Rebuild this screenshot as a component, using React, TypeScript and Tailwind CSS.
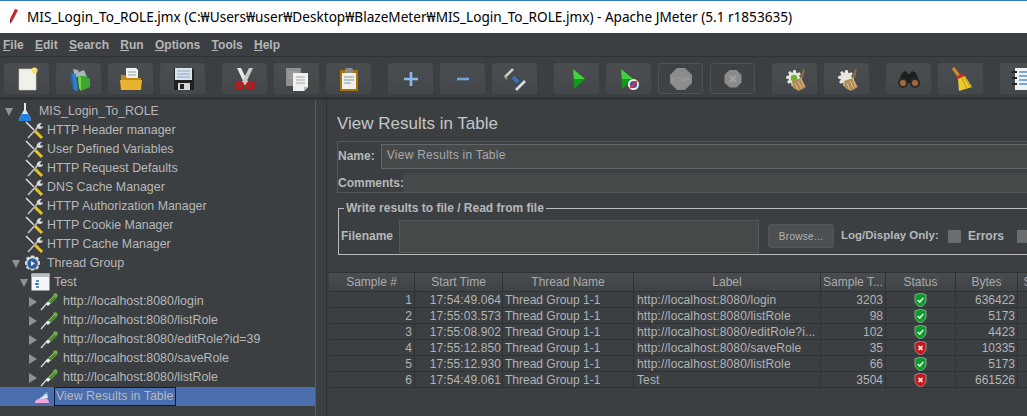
import type { ReactNode } from "react";

const textFont = "font-['Liberation_Sans',Arial,sans-serif]";

const Svg = ({ size = 24, view = 24, children }: { size?: number; view?: number; children: ReactNode }) => (
  <svg width={size} height={size} viewBox={`0 0 ${view} ${view}`} className="shrink-0">
    {children}
  </svg>
);

const NewIcon = () => (
  <Svg>
    <path d="M4 2h15l2 2v19H4z" fill="#f1f0ea" stroke="#cfcfc8" strokeWidth="0.6" />
    <circle cx="19.5" cy="3.5" r="3" fill="#f5e27a" />
  </Svg>
);
const TemplatesIcon = () => (
  <Svg>
    <path d="M6 2l5 1 1 2 5-2 3 7H8z" fill="#aab4ba" />
    <path d="M3 6l6 1 2 17-5-1z" fill="#2f7fc9" />
    <path d="M3 6l2 1 2 16-1 0z" fill="#1d5f9f" />
    <path d="M11 9h7l5 3v8l-9 4-2-3z" fill="#3aa92f" />
    <path d="M11 9l3 1 0 14-2-3z" fill="#7fd34e" />
  </Svg>
);
const OpenIcon = () => (
  <Svg>
    <path d="M7 1h10l2 2v10H7z" fill="#f2f2ee" />
    <path d="M9 5h8M9 8h8" stroke="#9aa0a6" strokeWidth="1" />
    <path d="M2 8h4l2 3h14v11H2z" fill="#c08a14" />
    <path d="M1 13h22l-1 10H2z" fill="#eab32f" />
  </Svg>
);
const SaveIcon = () => (
  <Svg>
    <path d="M3 1h18l2 2v20H3z" fill="#1e2022" />
    <rect x="4" y="1" width="17" height="12" fill="#dde3ea" />
    <path d="M6 4h13M6 7h13M6 10h13" stroke="#8ca6c4" strokeWidth="1" />
    <rect x="7" y="16" width="12" height="7" fill="#d6d6d6" />
    <rect x="9" y="17" width="4" height="5" fill="#222" />
  </Svg>
);
const CutIcon = () => (
  <Svg>
    <path d="M4 1l4 0 7 14-3 3z" fill="#e7e7e7" />
    <path d="M20 1l-4 0-7 14 3 3z" fill="#c9c9c9" />
    <circle cx="6.5" cy="18.5" r="4.5" fill="#c91414" />
    <circle cx="17.5" cy="18.5" r="4.5" fill="#c91414" />
    <circle cx="6.5" cy="18.5" r="1.5" fill="#4b4d4f" />
    <circle cx="17.5" cy="18.5" r="1.5" fill="#4b4d4f" />
  </Svg>
);
const CopyIcon = () => (
  <Svg>
    <rect x="1" y="1" width="15" height="18" fill="#8d8f90" />
    <path d="M3 5h10M3 8h10M3 11h10" stroke="#a9abac" strokeWidth="1" />
    <path d="M8 6h15v14l-4 4H8z" fill="#f0f0ee" />
    <path d="M11 10h9M11 13h9M11 16h9" stroke="#a4a6a8" strokeWidth="1" />
    <path d="M19 24v-4h4z" fill="#b9b9b7" />
  </Svg>
);
const PasteIcon = () => (
  <Svg>
    <rect x="3" y="3" width="18" height="21" fill="#a8720f" />
    <rect x="5" y="6" width="14" height="16" fill="#f0f0e8" />
    <rect x="8" y="1" width="8" height="5" rx="2" fill="#8b8d8f" />
    <path d="M7 10h10M7 13h10M7 16h7" stroke="#7f93a6" strokeWidth="1" />
  </Svg>
);
const PlusIcon = () => (
  <Svg>
    <path d="M12 5v14M5 12h14" stroke="#8ab8ec" strokeWidth="2.6" />
  </Svg>
);
const MinusIcon = () => (
  <Svg>
    <path d="M6 12h12" stroke="#6ea6de" strokeWidth="2.6" />
  </Svg>
);
const ToggleIcon = () => (
  <Svg>
    <path d="M2 10l8-8" stroke="#c7d0c7" strokeWidth="2.6" />
    <path d="M2 10l2 2" stroke="#6fae4f" strokeWidth="2" />
    <path d="M10 10l5 5" stroke="#3d6fb8" strokeWidth="4" />
    <path d="M13 23l9-9" stroke="#d7dde2" strokeWidth="2.6" />
  </Svg>
);
const StartIcon = () => (
  <Svg>
    <path d="M8 2l12 10-11 10z" fill="#14991e" />
    <path d="M8 2l12 10H9z" fill="#3fd23d" />
  </Svg>
);
const StartNoTimersIcon = () => (
  <Svg>
    <path d="M4 2l12 10-11 10z" fill="#14991e" />
    <path d="M4 2l12 10H5z" fill="#3fd23d" />
    <circle cx="16.5" cy="17.5" r="5.5" fill="#f2f2f2" />
    <circle cx="16.5" cy="17.5" r="3.6" fill="#3158b0" />
    <path d="M13 21l7-7" stroke="#e23838" strokeWidth="2" />
  </Svg>
);
const StopIcon = () => (
  <Svg>
    <path d="M8 1h8l7 7v8l-7 7H8l-7-7V8z" fill="#8b8b8b" />
    <text x="12" y="15" textAnchor="middle" fontSize="7" fontWeight="700" fill="#9a9a9a" fontFamily="Liberation Sans">STOP</text>
  </Svg>
);
const ShutdownIcon = () => (
  <Svg>
    <path d="M8.5 3h7l5 5v7.5l-5 5h-7l-5-5V8z" fill="#8b8b8b" />
    <path d="M9 9l6 6M15 9l-6 6" stroke="#a3a3a3" strokeWidth="2" />
  </Svg>
);
const GearPoints =
  "M9 1l2 0 1 3 3-1 1 2-2 2 3 1v3l-3 1 1 3-2 1-2-2-2 3-2-1 0-3-3 1-1-2 2-2-3-1V7l3-1-1-3 2-1 2 2z";
const ResetIcon = ({ dot }: { dot?: boolean }) => (
  <Svg>
    <path d={GearPoints} fill="#e6e6de" transform="translate(1 2) scale(1.05)" />
    {dot && <circle cx="11" cy="11" r="3.2" fill="#68b532" />}
    <path d="M9 14l9-3 5 9-7 4-6-3z" fill="#b08a58" />
    <path d="M12 16l3 7M15 14l4 8M18 12l3 8" stroke="#d9bc8a" strokeWidth="1" />
    <path d="M17 11l3-9 2 0-2 9z" fill="#8b6a3c" />
  </Svg>
);
const BinocularsIcon = () => (
  <Svg>
    <path d="M5 6l4-2 2 3h2l2-3 4 2 4 10H1z" fill="#1d1e1f" />
    <circle cx="6" cy="16" r="5" fill="#2a2a2a" />
    <circle cx="18" cy="16" r="5" fill="#2a2a2a" />
    <circle cx="6" cy="16" r="3" fill="#a9683a" />
    <circle cx="18" cy="16" r="3" fill="#a9683a" />
  </Svg>
);
const BroomIcon = () => (
  <Svg>
    <path d="M4 1l6 8" stroke="#d98a2c" strokeWidth="3" />
    <path d="M7 10l6-4 3 4-7 3z" fill="#c9302c" />
    <path d="M9 12l7-3 7 11-13 4z" fill="#eac92f" />
    <path d="M13 11l5 11M16 10l5 10" stroke="#b89412" strokeWidth="1" />
  </Svg>
);
const FunctionIcon = () => (
  <Svg>
    <rect x="4" y="1" width="20" height="22" fill="#f0f2f5" />
    <path d="M8 5h14M8 9h14M8 13h14M8 17h14" stroke="#4f8fd8" strokeWidth="1.4" />
    <path d="M1 5h5M1 11h5M1 17h5" stroke="#222" strokeWidth="2" />
  </Svg>
);

const WrenchIcon = () => (
  <Svg size={19} view={19}>
    <path d="M1 1l8 8" stroke="#e6e6e6" strokeWidth="1.4" />
    <path d="M10 10l7 7" stroke="#e8c21e" strokeWidth="3" />
    <path d="M10 9l-1 1" stroke="#222" strokeWidth="2" />
    <path d="M3 17L13 6" stroke="#b9bcbe" strokeWidth="1.8" />
    <path d="M12 7c-1-3 1-5 5-5l-2 2 1 2 2-1c0 3-3 4-6 2z" fill="#d6d8da" />
  </Svg>
);
const FlaskIcon = () => (
  <Svg size={18} view={18}>
    <path d="M8 0h2v7l5 9c0 1-1 2-2 2H5c-1 0-2-1-2-2l5-9z" fill="#e4e6e8" />
    <path d="M6 11h6l3 5c0 1-1 2-2 2H5c-1 0-2-1-2-2z" fill="#1f7fe0" />
  </Svg>
);
const ThreadIcon = () => (
  <Svg size={19} view={19}>
    <path d="M8 0h3l1 2 2-1 2 2-1 2 2 1v3l-2 1 1 2-2 2-2-1-1 2H8l-1-2-2 1-2-2 1-2-2-1V6l2-1-1-2 2-2 2 1z" fill="#d5d7d9" transform="translate(0 1.5)" />
    <circle cx="9.5" cy="9.5" r="5.2" fill="#2e5d9e" />
    <path d="M8 7l4 2.5L8 12z" fill="#dbe6f2" />
  </Svg>
);
const FragmentIcon = () => (
  <Svg size={19} view={19}>
    <rect x="0.5" y="0.5" width="18" height="17" fill="#f4f6f8" />
    <rect x="0.5" y="0.5" width="18" height="3.5" fill="#b9bcc0" />
    <path d="M5 8h3M5 11h3M5 14h3" stroke="#2f6fb8" strokeWidth="1.6" />
    <circle cx="5" cy="11" r="1" fill="#2c4f7a" />
  </Svg>
);
const PipetteIcon = () => (
  <Svg size={19} view={19}>
    <path d="M1 18L8 10" stroke="#d8dcdf" strokeWidth="1.4" />
    <path d="M6 12l3-3 2 2-3 3z" fill="#eef1f2" />
    <path d="M8 9l6-6 3 3-6 6z" fill="#4f8a32" />
    <path d="M13 3c1-2 3-2 4-1s1 3-1 4z" fill="#6fae4a" />
    <path d="M9 9l5-5" stroke="#90c46e" strokeWidth="1" />
  </Svg>
);
const ListenerIcon = () => (
  <Svg size={14} view={14}>
    <path d="M0 13c0-3 2-4 4-4 1-2 3-2 4-1 3 0 6 1 6 5z" fill="#f0a6df" />
    <path d="M5 9l7-7 1 6z" fill="#d7e6ef" />
    <path d="M10 3l2-1 1 4z" fill="#6fa6c8" />
  </Svg>
);

const ShieldIcon = ({ ok }: { ok: boolean }) => (
  <svg width="13" height="14" viewBox="0 0 14 15" className="shrink-0">
    <path d="M7 0l6 2v6c0 3-3 6-6 7-3-1-6-4-6-7V2z" fill={ok ? "#0e9a2e" : "#c3161c"} stroke="#e9f1ea" strokeWidth="0.5" />
    {ok ? (
      <path d="M4 7.5l2.2 2.2L10 5.2" stroke="#eafbe8" strokeWidth="1.6" fill="none" />
    ) : (
      <path d="M4.8 5.2l4.4 4.6M9.2 5.2L4.8 9.8" stroke="#f8e8e8" strokeWidth="1.6" fill="none" />
    )}
  </svg>
);

const TreeArrow = ({ open }: { open?: boolean }) => (
  <span
    className={
      open
        ? "w-0 h-0 border-x-[4.5px] border-x-transparent border-t-[8px] border-t-[#909294] shrink-0"
        : "w-0 h-0 border-y-[5px] border-y-transparent border-l-[8px] border-l-[#909294] shrink-0 mr-[1px]"
    }
  />
);

const ToolButton = ({ children, disabled }: { children?: ReactNode; disabled?: boolean }) => (
  <div
    className={
      disabled
        ? "w-[45px] h-[31px] shrink-0 flex items-center justify-center rounded-[3px] border border-[#4f5254] bg-[#3f4244]"
        : "w-[45px] h-[31px] shrink-0 flex items-center justify-center rounded-[3px] border border-[#484b4d] bg-gradient-to-b from-[#4b4e50] to-[#444749]"
    }
  >
    {children}
  </div>
);

const Underlined = ({ first, rest }: { first: string; rest: string }) => (
  <span>
    <span className="underline">{first}</span>
    {rest}
  </span>
);

const menus = [
  ["F", "ile"],
  ["E", "dit"],
  ["S", "earch"],
  ["R", "un"],
  ["O", "ptions"],
  ["T", "ools"],
  ["H", "elp"],
];

const configItems = [
  "HTTP Header manager",
  "User Defined Variables",
  "HTTP Request Defaults",
  "DNS Cache Manager",
  "HTTP Authorization Manager",
  "HTTP Cookie Manager",
  "HTTP Cache Manager",
];

const samplers = [
  "http://localhost:8080/login",
  "http://localhost:8080/listRole",
  "http://localhost:8080/editRole?id=39",
  "http://localhost:8080/saveRole",
  "http://localhost:8080/listRole",
];

const rows = [
  { n: 1, time: "17:54:49.064", label: "http://localhost:8080/login", ms: 3203, ok: true, bytes: 636422 },
  { n: 2, time: "17:55:03.573", label: "http://localhost:8080/listRole", ms: 98, ok: true, bytes: 5173 },
  { n: 3, time: "17:55:08.902", label: "http://localhost:8080/editRole?i...", ms: 102, ok: true, bytes: 4423 },
  { n: 4, time: "17:55:12.850", label: "http://localhost:8080/saveRole", ms: 35, ok: false, bytes: 10335 },
  { n: 5, time: "17:55:12.930", label: "http://localhost:8080/listRole", ms: 66, ok: true, bytes: 5173 },
  { n: 6, time: "17:54:49.061", label: "Test", ms: 3504, ok: false, bytes: 661526 },
];

const headers = ["Sample #", "Start Time", "Thread Name", "Label", "Sample T...", "Status", "Bytes", "S"];
const columns = "grid-cols-[86px_88px_131px_187px_65px_70px_62px_20px]";

export default function App() {
  return (
    <div className={`w-[1027px] h-[416px] overflow-hidden bg-[#3c3f41] text-[#b6b8ba] ${textFont}`}>
      {/* window title */}
      <div className="h-[33px] bg-white border-t border-[#2f7fc0] flex items-center pl-[9px] gap-[9px] text-[13.6px] text-black font-['Noto_Sans',sans-serif] whitespace-nowrap">
        <svg width="9" height="16" viewBox="0 0 9 16" className="shrink-0">
          <path d="M6 0l3 1-5 10-3-1z" fill="#c8242c" />
          <path d="M1 10l3 1-3 4z" fill="#7a2a2a" />
        </svg>
        <span>MIS_Login_To_ROLE.jmx (C:₩Users₩user₩Desktop₩BlazeMeter₩MIS_Login_To_ROLE.jmx) - Apache JMeter (5.1 r1853635)</span>
      </div>

      {/* menu */}
      <div className="h-[24px] flex items-center pl-[3px] gap-[11.3px] border-b border-[#2f3133] text-[12px] font-bold text-[#b4b6b8]">
        {menus.map(([first, rest]) => (
          <Underlined key={first} first={first} rest={rest} />
        ))}
      </div>

      {/* toolbar */}
      <div className="h-[43px] flex items-start pl-[4px] pt-[6px] border-b-[3px] border-[#303234]">
        <div className="flex gap-[7px]">
          <ToolButton><NewIcon /></ToolButton>
          <ToolButton><TemplatesIcon /></ToolButton>
          <ToolButton><OpenIcon /></ToolButton>
          <ToolButton><SaveIcon /></ToolButton>
        </div>
        <div className="flex gap-[7px] ml-[17px]">
          <ToolButton><CutIcon /></ToolButton>
          <ToolButton><CopyIcon /></ToolButton>
          <ToolButton><PasteIcon /></ToolButton>
        </div>
        <div className="flex gap-[7px] ml-[17px]">
          <ToolButton><PlusIcon /></ToolButton>
          <ToolButton><MinusIcon /></ToolButton>
          <ToolButton><ToggleIcon /></ToolButton>
        </div>
        <div className="flex gap-[7px] ml-[17px]">
          <ToolButton><StartIcon /></ToolButton>
          <ToolButton><StartNoTimersIcon /></ToolButton>
          <ToolButton disabled><StopIcon /></ToolButton>
          <ToolButton disabled><ShutdownIcon /></ToolButton>
        </div>
        <div className="flex gap-[7px] ml-[17px]">
          <ToolButton><ResetIcon dot /></ToolButton>
          <ToolButton><ResetIcon /></ToolButton>
        </div>
        <div className="flex gap-[7px] ml-[17px]">
          <ToolButton><BinocularsIcon /></ToolButton>
          <ToolButton><BroomIcon /></ToolButton>
        </div>
        <div className="flex gap-[7px] ml-[17px]">
          <ToolButton><FunctionIcon /></ToolButton>
        </div>
      </div>

      <div className="flex h-[316px]">
        {/* test plan tree */}
        <div className="w-[316px] shrink-0 border-r border-[#5a5d5f] pt-[2px] text-[12.4px] whitespace-nowrap">
          <div className="h-[19px] flex items-center pl-[5px]">
            <TreeArrow open />
            <span className="ml-[3px]"><FlaskIcon /></span>
            <span className="ml-[5px]">MIS_Login_To_ROLE</span>
          </div>
          {configItems.map((item) => (
            <div key={item} className="h-[19px] flex items-center pl-[25px] gap-[3px]">
              <WrenchIcon />
              <span>{item}</span>
            </div>
          ))}
          <div className="h-[19px] flex items-center pl-[12px]">
            <TreeArrow open />
            <span className="ml-[3px]"><ThreadIcon /></span>
            <span className="ml-[5px]">Thread Group</span>
          </div>
          <div className="h-[19px] flex items-center pl-[20px]">
            <TreeArrow open />
            <span className="ml-[3px]"><FragmentIcon /></span>
            <span className="ml-[4px]">Test</span>
          </div>
          {samplers.map((item, i) => (
            <div key={i} className="h-[19px] flex items-center pl-[29px]">
              <TreeArrow />
              <span className="ml-[2px]"><PipetteIcon /></span>
              <span className="ml-[4px]">{item}</span>
            </div>
          ))}
          <div className="h-[19px] flex items-center pl-[35px] bg-[#4b6eaf]">
            <ListenerIcon />
            <span className="ml-[5px] pl-[1px] border border-[#0e1a33] h-[19px] leading-[17px] w-[122px]">View Results in Table</span>
          </div>
        </div>

        {/* results panel */}
        <div className="flex-1 min-w-0 border-l border-[#2f3133] ml-[10px] whitespace-nowrap text-[12px]">
          <div className="pl-[10px]">
            <div className="pt-[12px] h-[41px] text-[17px] leading-[24px] text-[#c4c6c8]">View Results in Table</div>
            <div className="border border-[#54575a] border-r-0 w-[700px] h-[52px]">
              <div className="flex items-center h-[26px] mt-[1px]">
                <span className="font-bold w-[43px]">Name:</span>
                <div className="w-[660px] h-[25px] bg-[#45494a] border border-[#646769] flex items-center pl-[5px] pb-[2px] text-[#a8aaac] tracking-[0.25px]">
                  View Results in Table
                </div>
              </div>
              <div className="flex items-center h-[19px] mt-[4px]">
                <span className="font-bold w-[65px]">Comments:</span>
                <div className="flex-1 h-[19px] bg-[#45494a]" />
              </div>
            </div>
            <fieldset className="border border-[#bbbbbb] border-r-0 mt-[8px] ml-[1px] w-[700px] h-[54px] pl-[2px]">
              <legend className="ml-[3px] px-[2px] font-bold text-[12px] leading-[14px]">Write results to file / Read from file</legend>
              <div className="flex items-center h-[34px] mt-[4px]">
                <span className="font-bold w-[58px]">Filename</span>
                <div className="w-[360px] h-[33px] bg-[#45494a] border border-[#55585a]" />
                <div className="ml-[9px] w-[66px] h-[24px] rounded-[3px] border border-[#55585a] bg-[#4c5052] flex items-center justify-center text-[10px] tracking-[0.3px] text-[#b0b2b4]">
                  Browse...
                </div>
                <span className="ml-[7px] font-bold w-[107px] text-[11.5px]">Log/Display Only:</span>
                <span className="w-[13px] h-[13px] bg-[#6a6c6e] rounded-[1px]" />
                <span className="ml-[7px] font-bold w-[49px]">Errors</span>
                <span className="w-[13px] h-[13px] bg-[#6a6c6e] rounded-[1px]" />
              </div>
            </fieldset>
          </div>

          {/* results table */}
          <div className="mt-[17px] ml-[2px] w-[700px]">
            <div className={`grid ${columns} h-[20px] items-center bg-gradient-to-b from-[#4a4d4f] to-[#404345] border-y border-[#2f3133] text-[#a9abad]`}>
              {headers.map((h) => (
                <div key={h} className="h-full border-r border-[#2f3133] text-center leading-[19px]">{h}</div>
              ))}
            </div>
            {rows.map((r) => (
              <div key={r.n} className={`grid ${columns} h-[16px] items-center border-b border-[#2f3133] leading-[17px] text-[#b2b4b6]`}>
                <div className="h-full border-r border-[#2f3133] text-right pr-[2px]">{r.n}</div>
                <div className="h-full border-r border-[#2f3133] text-right pr-[1px] tracking-[0.1px]">{r.time}</div>
                <div className="h-full border-r border-[#2f3133] pl-[2px]">Thread Group 1-1</div>
                <div className="h-full border-r border-[#2f3133] pl-[3px] tracking-[0.12px] overflow-hidden">{r.label}</div>
                <div className="h-full border-r border-[#2f3133] text-right pr-[2px]">{r.ms}</div>
                <div className="h-full border-r border-[#2f3133] flex justify-center pt-[1px]"><ShieldIcon ok={r.ok} /></div>
                <div className="h-full border-r border-[#2f3133] text-right pr-[2px]">{r.bytes}</div>
                <div className="h-full" />
              </div>
            ))}
          </div>
        </div>
      </div>
    </div>
  );
}
